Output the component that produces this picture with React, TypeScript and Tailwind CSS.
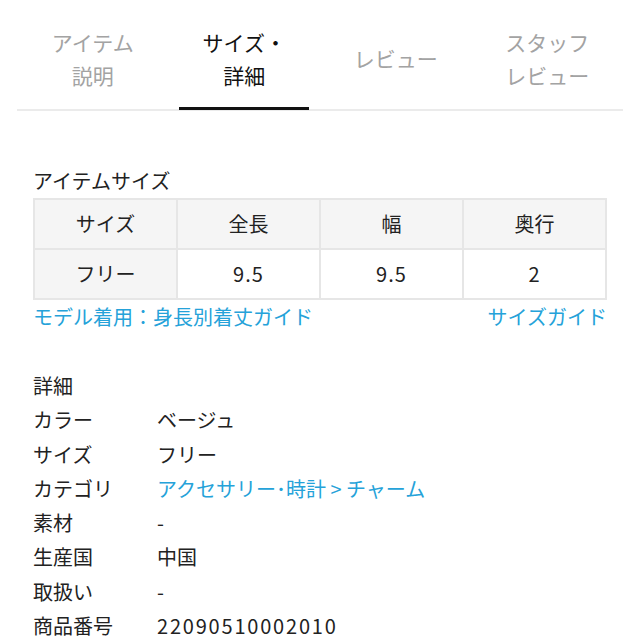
import React from 'react';

const tabs = [
  { lines: ['アイテム', '説明'], active: false },
  { lines: ['サイズ・', '詳細'], active: true },
  { lines: ['レビュー'], active: false },
  { lines: ['スタッフ', 'レビュー'], active: false },
];

const details: { label: string; value: string; link?: boolean; num?: boolean }[] = [
  { label: 'カラー', value: 'ベージュ' },
  { label: 'サイズ', value: 'フリー' },
  { label: 'カテゴリ', value: 'アクセサリー･時計 > チャーム', link: true },
  { label: '素材', value: '-' },
  { label: '生産国', value: '中国' },
  { label: '取扱い', value: '-' },
  { label: '商品番号', value: '22090510002010', num: true },
];

const App: React.FC = () => {
  return (
    <div
      className="w-[640px] h-[640px] overflow-hidden bg-white text-[#222]"
      style={{ fontFamily: '"Noto Sans CJK JP", "Noto Sans", sans-serif' }}
    >
      {/* Tabs */}
      <div className="mx-[17px] mt-[25px] flex border-b-2 border-[#ebebeb]">
        {tabs.map((t, i) => (
          <div key={i} className="relative flex h-[84px] flex-1 flex-col items-center justify-start">
            <div
              className={`flex h-[67px] flex-col items-center justify-center text-[21px] leading-[33px] ${
                t.active ? 'text-[#111]' : 'text-[#a3a3a3]'
              }`}
            >
              {t.lines.map((l) => (
                <span key={l}>{l}</span>
              ))}
            </div>
            {t.active && <div className="absolute bottom-[-1px] h-[3px] w-[130px] bg-[#111]" />}
          </div>
        ))}
      </div>

      {/* Item size */}
      <div className="px-[33px] pt-[57px]">
        <div className="text-[20px] leading-[26px]">アイテムサイズ</div>
        <table className="mt-[4px] w-full table-fixed border-collapse text-[20px]">
          <tbody>
            <tr className="h-[50px] bg-[#f5f5f5]">
              {['サイズ', '全長', '幅', '奥行'].map((h) => (
                <td key={h} className="border-2 border-[#e6e6e6] text-center">
                  {h}
                </td>
              ))}
            </tr>
            <tr className="h-[50px]">
              <td className="border-2 border-[#e6e6e6] bg-[#f5f5f5] text-center">フリー</td>
              {['9.5', '9.5', '2'].map((v, i) => (
                <td key={i} className="border-2 border-[#e6e6e6] text-center tracking-[1px]">
                  {v}
                </td>
              ))}
            </tr>
          </tbody>
        </table>
        <div className="mt-[3px] flex justify-between text-[20px] leading-[28px] text-[#25a2d9]">
          <span>モデル着用：身長別着丈ガイド</span>
          <span>サイズガイド</span>
        </div>
      </div>

      {/* Details */}
      <div className="px-[33px] pt-[38px] text-[20px] leading-[34.3px]">
        <div>詳細</div>
        {details.map((d) => (
          <div key={d.label} className="flex">
            <span className="w-[124px] shrink-0">{d.label}</span>
            <span className={d.link ? 'text-[#25a2d9]' : d.num ? 'tracking-[1.8px]' : ''}>{d.value}</span>
          </div>
        ))}
      </div>
    </div>
  );
};

export default App;
